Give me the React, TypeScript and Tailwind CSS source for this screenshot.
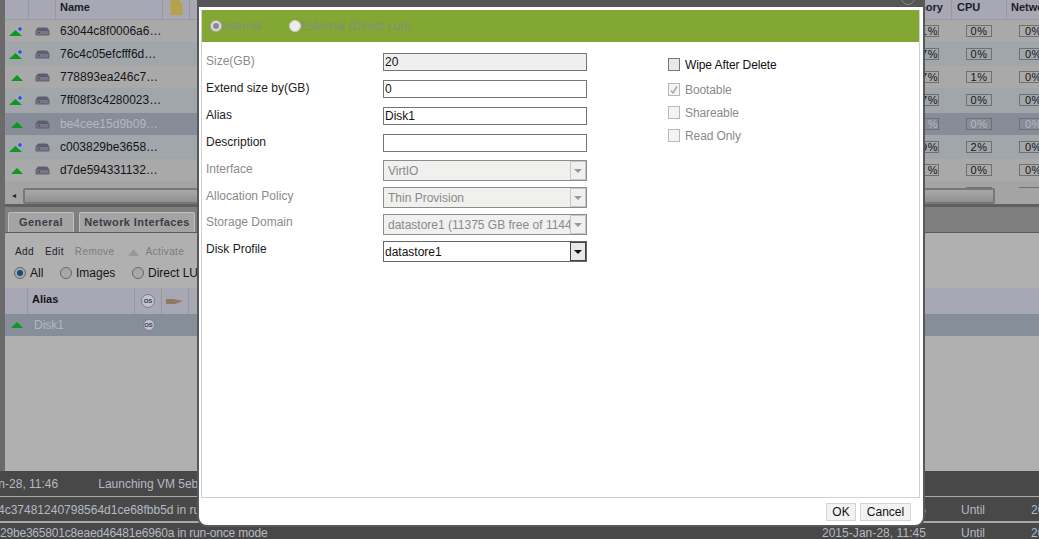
import React from 'react';

const vmRows = [
  { id: '63044c8f0006a6…', dot: true, mem: '1%', cpu: '0%', net: '0%' },
  { id: '76c4c05efcfff6d…', dot: true, mem: '7%', cpu: '0%', net: '0%' },
  { id: '778893ea246c7…', dot: false, mem: '7%', cpu: '1%', net: '0%' },
  { id: '7ff08f3c4280023…', dot: true, mem: '7%', cpu: '0%', net: '0%' },
  { id: 'be4cee15d9b09…', dot: false, mem: '%', cpu: '0%', net: '0%', selected: true },
  { id: 'c003829be3658…', dot: true, mem: '9%', cpu: '2%', net: '0%' },
  { id: 'd7de594331132…', dot: false, mem: '%', cpu: '0%', net: '0%' },
];

const rowColors = ['bg-[#a9a9a9]', 'bg-[#a0a6aa]'];

const StatusIcon = ({ dot }: { dot: boolean }) => (
  <svg width="16" height="14" viewBox="0 0 16 14">
    {dot ? (
      <>
        <path d="M1 12 L7.500 6 L14 12 Z" fill="#0a9a1e" />
        <circle cx="12" cy="5" r="2.4" fill="#3a55c0" stroke="#b9c4e0" strokeWidth="0.8" />
      </>
    ) : (
      <path d="M3 11 L9 5 L15 11 Z" fill="#0a9a1e" />
    )}
  </svg>
);

const DiskIcon = () => (
  <svg width="15" height="9" viewBox="0 0 15 9">
    <path d="M2 1.5 Q2.5 0.5 4 0.5 H11 Q12.5 0.5 13 1.5 L14.5 4 V7.5 Q14.5 8.5 13.5 8.5 H1.5 Q0.5 8.5 0.5 7.5 V4 Z" fill="#5e5e70" />
    <rect x="1.5" y="4" width="12" height="3.5" fill="#77778a" />
    <rect x="3" y="5" width="2" height="1.2" fill="#7a3a30" />
  </svg>
);

const Pct = ({ value, className }: { value: string; className: string }) => (
  <div className={`h-[12px] flex items-center justify-center border border-[#707070] text-[11px] leading-none tracking-[0.5px] ${className}`}>{value}</div>
);

const GridPanel = () => (
  <div className="h-[204px] flex flex-col overflow-hidden">
    <div className="h-[20px] shrink-0 flex justify-between bg-[#a8a8b4] border-b border-[#9a9aa4] text-[11px] leading-[14px] font-bold text-[#1c1c28]">
      <div className="flex">
        <div className="w-[24px] border-r border-[#98989f]" />
        <div className="w-[27px] border-r border-[#98989f]" />
        <div className="w-[107px] pl-[4px] pr-[2px] border-r border-[#98989f]">Name</div>
        <div className="w-[27px] border-r border-[#98989f] flex justify-center">
          <svg width="13" height="15" viewBox="0 0 13 15"><path d="M0.5 0 H9 L12.5 4 V15 H0.5 Z" fill="#b5a24a" /></svg>
        </div>
      </div>
      <div className="flex">
        <div className="w-[33px] border-r border-[#98989f]">nory</div>
        <div className="w-[55px] pl-[5px] border-r border-[#98989f]">CPU</div>
        <div className="w-[32px] pl-[4px] overflow-hidden whitespace-nowrap">Network</div>
      </div>
    </div>
    <div className="h-[168px] shrink-0 flex flex-col gap-[1px] bg-[#a4a4a4] overflow-hidden">
      {vmRows.map((row, i) => (
        <div
          key={row.id}
          className={`h-[22px] shrink-0 flex justify-between items-center ${row.selected ? 'mt-[1px] bg-[#868c98] text-[#b4b8c0]' : `${rowColors[i % 2]} text-[#14141a]`}`}
        >
          <div className="flex items-center text-[12px]">
            <div className="w-[24px] pl-[3px]"><StatusIcon dot={row.dot} /></div>
            <div className="w-[27px] flex justify-center"><DiskIcon /></div>
            <div className="w-[107px] pl-[4px] whitespace-nowrap">{row.id}</div>
          </div>
          <div className="flex items-center">
            <Pct value={row.mem} className="w-[15px] border-l-0 justify-end" />
            <div className="w-[27px]" />
            <Pct value={row.cpu} className="w-[26px]" />
            <div className="w-[27px]" />
            <Pct value={row.net} className="w-[20px] border-r-0 justify-start pl-[5px] overflow-hidden" />
          </div>
        </div>
      ))}
      {/* next row, only the tops of its boxes show above the scrollbar */}
      <div className="h-[22px] shrink-0 flex justify-end items-center">
        <div className="w-[26px] h-[12px] border border-[#707070]" />
        <div className="w-[27px]" />
        <div className="w-[20px] h-[12px] border border-r-0 border-[#707070]" />
      </div>
    </div>
    <div className="h-[16px] shrink-0 flex bg-[#a4a4a4]">
      <div className="w-[18px] flex items-center justify-center text-[8px] text-[#222]">◂</div>
      <div className="flex-1 mr-[44px] border-2 border-[#777] rounded-[2px] bg-linear-to-b from-[#a8a8a8] to-[#909090]" />
    </div>
  </div>
);

const Tab = ({ label, className }: { label: string; className: string }) => (
  <div className={`h-[20px] flex items-center justify-center bg-[#a4a4a4] border-t border-x border-[#c0c0c0] rounded-t-[2px] text-[11px] font-bold tracking-[0.4px] text-[#3c3c48] ${className}`}>{label}</div>
);

const Radio = ({ checked }: { checked?: boolean }) => (
  <span className="w-[12px] h-[12px] rounded-full border border-[#666] bg-[#a8a8a8] flex items-center justify-center shrink-0">
    {checked && <span className="w-[6px] h-[6px] rounded-full bg-[#144e78]" />}
  </span>
);

const OsBadge = ({ small }: { small?: boolean }) => (
  <span className={`rounded-full border border-[#7c7c90] bg-[#c0c4d0] flex items-center justify-center text-[6px] font-bold text-[#343448] ${small ? 'w-[12px] h-[12px]' : 'w-[14px] h-[14px]'}`}>OS</span>
);

const DetailPanel = () => (
  <div className="flex-1 flex flex-col min-h-0 -ml-[5px] pl-[5px]">
    <div className="h-[3px] shrink-0 bg-[#606060]" />
    <div className="h-[26px] shrink-0 flex items-end gap-[5px] pl-[3px] bg-[#7f7f7f] border-b border-[#5a5a5a]">
      <Tab label="General" className="w-[66px]" />
      <Tab label="Network Interfaces" className="w-[116px]" />
    </div>
    <div className="flex-1 flex flex-col bg-[#b0b0b0]">
      <div className="flex items-center gap-[11px] pl-[10px] pt-[13px] text-[10px] leading-[12px] h-[25px] tracking-[0.4px] text-[#202028]">
        <span>Add</span>
        <span>Edit</span>
        <span className="text-[#7c7c7c]">Remove</span>
        <span className="flex items-center gap-[6px] ml-[3px] text-[#7c7c7c]">
          <svg width="11" height="7" viewBox="0 0 11 7"><path d="M0 7 L5.500 0 L11 7 Z" fill="#999" /></svg>
          Activate
        </span>
      </div>
      <div className="flex items-center pl-[9px] mt-[8px] h-[14px] text-[12px] text-[#14141a] whitespace-nowrap overflow-hidden">
        <Radio checked />
        <span className="ml-[4px] w-[30px]">All</span>
        <Radio />
        <span className="ml-[4px] w-[56px]">Images</span>
        <Radio />
        <span className="ml-[4px]">Direct LUN</span>
      </div>
      <div className="h-[26px] mt-[8px] flex bg-[#a8a8b4] text-[11px] font-bold text-[#14141a]">
        <div className="w-[23px] border-r border-[#98989f]" />
        <div className="w-[107px] pl-[4px] pt-[3px] border-r border-[#98989f]">Alias</div>
        <div className="w-[27px] flex items-center justify-center border-r border-[#98989f]"><OsBadge /></div>
        <div className="w-[27px] flex items-center justify-center border-r border-[#98989f]">
          <svg width="18" height="7" viewBox="0 0 18 7"><path d="M0 1 H7 L17 3 L9 6 H0 Z" fill="#8d7a60" /></svg>
        </div>
      </div>
      <div className="h-[22px] flex items-center bg-[#868e9a] text-[12px] text-[#b4b8c0]">
        <div className="w-[23px] flex justify-center">
          <svg width="12" height="6" viewBox="0 0 12 6"><path d="M0 6 L6 0 L12 6 Z" fill="#0a9a1e" /></svg>
        </div>
        <div className="w-[107px] pl-[6px]">Disk1</div>
        <div className="w-[27px] flex justify-center"><OsBadge small /></div>
      </div>
    </div>
  </div>
);

const EventRow = ({ left, right, time, height }: { left: React.ReactNode; right?: boolean; time?: string; height: string }) => (
  <div className={`flex justify-between items-center whitespace-nowrap overflow-hidden text-[12px] text-[#b4bac2] ${height}`}>
    {left}
    {right && (
      <div className="flex items-center shrink-0">
        <span className="tracking-[0.05px]">{time}</span>
        <span className="ml-[35px] w-[70px]">Until</span>
        <span className="w-[8px] overflow-hidden">2015</span>
      </div>
    )}
  </div>
);

const Background = () => (
  <div className="h-[539px] flex flex-col bg-[#484848] overflow-hidden font-['Liberation_Sans',sans-serif]">
    <div className="h-[471px] shrink-0 flex flex-col pl-[5px] bg-[#6a6a6a]">
      <GridPanel />
      <DetailPanel />
    </div>
    <div className="flex-1 flex flex-col">
      <EventRow
        height="h-[25px] pt-[1px]"
        left={
          <div className="flex -ml-[45px]">
            <span>2015-Jan-28, 11:46</span>
            <span className="ml-[40px]">Launching VM 5eb8c1d0 on host</span>
          </div>
        }
      />
      <div className="h-[1px] bg-[#a8a8a8]" />
      <EventRow
        height="h-[24px] pt-[1px]"
        left={<span className="-ml-[2px]">4c37481240798564d1ce68fbb5d in run-once mode</span>}
        right
        time="2015-Jan-28, 11:45"
      />
      <div className="h-[2px] bg-[#a8a8a8]" />
      <EventRow
        height="h-[17px] pt-[3px]"
        left={<span className="tracking-[-0.2px]">29be365801c8eaed46481e6960a in run-once mode</span>}
        right
        time="2015-Jan-28, 11:45"
      />
    </div>
  </div>
);

const Field = ({ label, disabled, labelClass = 'mt-[1px]', children }: { label: string; disabled?: boolean; labelClass?: string; children: React.ReactNode }) => (
  <div className="flex items-start">
    <div className={`w-[177px] text-[12px] leading-[14px] ${labelClass} ${disabled ? 'text-[#8a8a8a]' : 'text-[#222222]'}`}>{label}</div>
    {children}
  </div>
);

const TextBox = ({ value, disabled }: { value: string; disabled?: boolean }) => (
  <div className={`w-[204px] h-[18px] border border-[#767676] px-[1px] text-[12px] leading-[16px] text-[#111] ${disabled ? 'bg-[#efefef]' : 'bg-white'}`}>{value}</div>
);

const SelectBox = ({ value, disabled }: { value: string; disabled?: boolean }) => (
  <div className={`w-[204px] h-[21px] flex items-center border ${disabled ? 'border-[#8c8c8c] bg-[#f0f0ee] text-[#8a8a8a]' : 'border-[#666] bg-white text-[#111]'} text-[12px]`}>
    <div className={`flex-1 overflow-hidden whitespace-nowrap ${disabled ? 'pl-[4px]' : 'pl-[1px]'}`}>{value}</div>
    <div className={`w-[16px] h-[19px] shrink-0 flex items-center justify-center border ${disabled ? 'border-[#c8c8c8]' : 'border-[#444] bg-[#e8e8e8]'}`}>
      <span className={`w-0 h-0 border-x-[4px] border-x-transparent border-t-[4px] ${disabled ? 'border-t-[#999]' : 'border-t-[#111]'}`} />
    </div>
  </div>
);

const Check = ({ label, checked, disabled, className = '' }: { label: string; checked?: boolean; disabled?: boolean; className?: string }) => (
  <div className={`flex items-center gap-[5px] h-[13px] text-[12px] tracking-[-0.1px] ${disabled ? 'text-[#8a8a8a]' : 'text-[#111]'} ${className}`}>
    <span className={`w-[12px] h-[13px] border flex items-center justify-center ${disabled ? 'border-[#b8b8b8] bg-[#f4f4f4]' : 'border-[#777] bg-[#e8e8e8]'}`}>
      {checked && (
        <svg width="10" height="10" viewBox="0 0 10 10"><path d="M2 5.500 L4 8 L8 1.500" fill="none" stroke="#a8a8a8" strokeWidth="1.500" /></svg>
      )}
    </span>
    {label}
  </div>
);

const Modal = () => (
  <div className="absolute left-[197px] top-0 w-[728px] h-[527px] flex flex-col bg-white border-x-2 border-b-2 border-[#585858] rounded-b-[10px] font-['Liberation_Sans',sans-serif]">
    <div className="h-[7px] shrink-0 bg-[#555555] relative">
      <span className="absolute right-[8px] -top-[9px] w-[14px] h-[14px] rounded-full border border-[#888]" />
    </div>
    <div className="flex-1 flex flex-col pl-[2px] pr-[3px] pt-[3px]">
      <div className="h-[488px] flex flex-col border-x border-b border-[#ccd2d8]">
        <div className="h-[32px] shrink-0 flex items-center pl-[8px] bg-[#82a733] text-[12px] text-[#858f78]">
          <span className="w-[12px] h-[12px] rounded-full bg-[#dcdcdc] border border-[#aaa] flex items-center justify-center">
            <span className="w-[6px] h-[6px] rounded-full bg-[#8a8a8a]" />
          </span>
          <span className="w-[67px]">Internal</span>
          <span className="w-[12px] h-[12px] rounded-full bg-[#ececec] border border-[#ccc]" />
          <span>External (Direct Lun)</span>
        </div>
        <div className="flex pl-[4px] pt-[11px]">
          <div className="flex flex-col">
            <div className="flex flex-col gap-[9px]">
              <Field label="Size(GB)" disabled><TextBox value="20" disabled /></Field>
              <Field label="Extend size by(GB)"><TextBox value="0" /></Field>
              <Field label="Alias"><TextBox value="Disk1" /></Field>
              <Field label="Description"><TextBox value="" /></Field>
            </div>
            <div className="flex flex-col gap-[6px] mt-[8px]">
              <Field label="Interface" disabled labelClass="mt-[2px]"><SelectBox value="VirtIO" disabled /></Field>
              <Field label="Allocation Policy" disabled labelClass="mt-[2px]"><SelectBox value="Thin Provision" disabled /></Field>
              <Field label="Storage Domain" disabled><SelectBox value="datastore1 (11375 GB free of 11441 GB)" disabled /></Field>
              <Field label="Disk Profile"><SelectBox value="datastore1" /></Field>
            </div>
          </div>
          <div className="flex flex-col gap-[10px] ml-[81px] pt-[5px]">
            <Check label="Wipe After Delete" />
            <Check label="Bootable" checked disabled className="mt-[2px]" />
            <Check label="Shareable" disabled />
            <Check label="Read Only" disabled />
          </div>
        </div>
      </div>
      <div className="flex justify-end gap-[4px] pt-[5px] pr-[9px]">
        <button className="w-[30px] h-[18px] bg-[#f2f2f2] border border-[#d4d4d4] text-[12px] leading-none text-[#111]">OK</button>
        <button className="w-[51px] h-[18px] bg-[#f2f2f2] border border-[#d4d4d4] text-[12px] leading-none text-[#111]">Cancel</button>
      </div>
    </div>
  </div>
);

export default function App() {
  return (
    <div className="relative w-[1039px] h-[539px] overflow-hidden">
      <Background />
      <Modal />
    </div>
  );
}
